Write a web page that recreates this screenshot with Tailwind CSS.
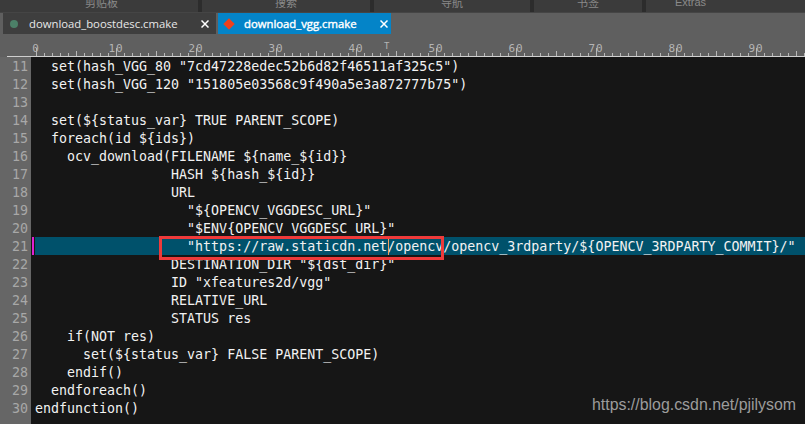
<!DOCTYPE html>
<html lang="en">
<head>
    <meta charset="UTF-8">
    <title>download_vgg.cmake</title>
    <script src="https://cdn.jsdelivr.net/npm/@tailwindcss/browser@4"></script>
</head>
<body class="bg-[#161616]">
    <div class="relative w-[805px] h-[424px] overflow-hidden flex flex-col">
        <!-- Ribbon, cut off at the top -->
        <div class="flex h-[12px] shrink-0 gap-[4px] bg-[#2c2c2c] overflow-hidden text-[11px] leading-[10px] text-[#8a8a8a] font-['Noto_Sans_CJK_SC',sans-serif]">
            <div class="w-[198px] bg-[#3b3b3b] text-right pr-[80px] -mt-[3px] h-[16px]">剪贴板</div>
            <div class="w-[168px] bg-[#3b3b3b] text-center -mt-[3px] h-[16px]">搜索</div>
            <div class="w-[156px] bg-[#3b3b3b] text-center -mt-[3px] h-[16px]">导航</div>
            <div class="w-[108px] bg-[#3b3b3b] text-center -mt-[3px] h-[16px]">书签</div>
            <div class="flex-1 bg-[#3b3b3b] text-center -mt-[3px] h-[16px] pr-[70px] font-['Liberation_Sans',sans-serif]">Extras</div>
        </div>

        <!-- Tabs -->
        <div class="flex h-[22px] shrink-0 pl-[3px] gap-[2px] bg-[#5f5f5f] border-t border-[#454545] text-[11.3px] leading-[21px] font-['Open_Sans',sans-serif]">
            <div class="w-[213px] flex items-center bg-[#3e3e3e] text-[#e8e8e8]">
                <span class="ml-[7px] w-[8px] h-[8px] rounded-full bg-[#4c8068]"></span>
                <span class="ml-[11px] flex-1">download_boostdesc.cmake</span>
                <svg class="mr-[7px]" width="8" height="8" viewBox="0 0 8 8"><path d="M0.5 0.5L7.5 7.5M7.5 0.5L0.5 7.5" stroke="#fff" stroke-width="1.5"/></svg>
            </div>
            <div class="w-[173px] flex items-center bg-[#0484c8] text-white [-webkit-text-stroke:0.4px_white]">
                <span class="ml-[7px] w-[8px] h-[8px] rotate-45 bg-[#f0401c]"></span>
                <span class="ml-[11px] flex-1">download_vgg.cmake</span>
                <svg class="mr-[3px]" width="8" height="8" viewBox="0 0 8 8"><path d="M0.5 0.5L7.5 7.5M7.5 0.5L0.5 7.5" stroke="#fff" stroke-width="1.5"/></svg>
            </div>
        </div>

        <!-- Ruler -->
        <div class="relative h-[23px] shrink-0 bg-[#5f5f5f] font-['DejaVu_Sans_Mono',monospace] text-[11px] leading-[12px] tracking-[1px] text-[#b4b4b4]">
            <svg class="absolute left-0 top-0" width="805" height="23">
                <defs>
                    <pattern id="ticks" x="36" y="0" width="80" height="23" patternUnits="userSpaceOnUse">
                        <path d="M0.5 14V22M8.5 19V22M16.5 19V22M24.5 19V22M32.5 19V22M40.5 17V22M48.5 19V22M56.5 19V22M64.5 19V22M72.5 19V22" stroke="#b8b8b8"/>
                    </pattern>
                </defs>
                <rect x="36" width="769" height="23" fill="url(#ticks)"/>
                <rect x="7" y="22" width="798" height="1" fill="#cfcfcf"/>
            </svg>
            <div class="relative flex ml-[-4px] pt-[9px]">
                <span class="w-[80px] shrink-0 text-center">0</span>
                <span class="w-[80px] shrink-0 text-center">10</span>
                <span class="w-[80px] shrink-0 text-center">20</span>
                <span class="w-[80px] shrink-0 text-center">30</span>
                <span class="w-[80px] shrink-0 text-center">40</span>
                <span class="w-[80px] shrink-0 text-center">50</span>
                <span class="w-[80px] shrink-0 text-center">60</span>
                <span class="w-[80px] shrink-0 text-center">70</span>
                <span class="w-[80px] shrink-0 text-center">80</span>
                <span class="w-[80px] shrink-0 text-center">90</span>
            </div>
            <span class="absolute left-[384px] top-[8px] text-[9px] leading-[9px]">T</span>
        </div>

        <!-- Editor -->
        <div class="flex-1 font-['DejaVu_Sans_Mono',monospace] text-[13.3px] leading-[20px] text-[#f2f2f2]">
            <div class="flex h-[18px]"><span class="w-[31px] shrink-0 pr-[3px] text-right bg-[#666666] text-[#a8a8a8]">11</span><span class="pl-[4px] whitespace-pre">  set(hash_VGG_80 "7cd47228edec52b6d82f46511af325c5")</span></div>
            <div class="flex h-[18px]"><span class="w-[31px] shrink-0 pr-[3px] text-right bg-[#666666] text-[#a8a8a8]">12</span><span class="pl-[4px] whitespace-pre">  set(hash_VGG_120 "151805e03568c9f490a5e3a872777b75")</span></div>
            <div class="flex h-[18px]"><span class="w-[31px] shrink-0 pr-[3px] text-right bg-[#666666] text-[#a8a8a8]">13</span></div>
            <div class="flex h-[18px]"><span class="w-[31px] shrink-0 pr-[3px] text-right bg-[#666666] text-[#a8a8a8]">14</span><span class="pl-[4px] whitespace-pre">  set(${status_var} TRUE PARENT_SCOPE)</span></div>
            <div class="flex h-[18px]"><span class="w-[31px] shrink-0 pr-[3px] text-right bg-[#666666] text-[#a8a8a8]">15</span><span class="pl-[4px] whitespace-pre">  foreach(id ${ids})</span></div>
            <div class="flex h-[18px]"><span class="w-[31px] shrink-0 pr-[3px] text-right bg-[#666666] text-[#a8a8a8]">16</span><span class="pl-[4px] whitespace-pre">    ocv_download(FILENAME ${name_${id}}</span></div>
            <div class="flex h-[18px]"><span class="w-[31px] shrink-0 pr-[3px] text-right bg-[#666666] text-[#a8a8a8]">17</span><span class="pl-[4px] whitespace-pre">                 HASH ${hash_${id}}</span></div>
            <div class="flex h-[18px]"><span class="w-[31px] shrink-0 pr-[3px] text-right bg-[#666666] text-[#a8a8a8]">18</span><span class="pl-[4px] whitespace-pre">                 URL</span></div>
            <div class="flex h-[18px]"><span class="w-[31px] shrink-0 pr-[3px] text-right bg-[#666666] text-[#a8a8a8]">19</span><span class="pl-[4px] whitespace-pre">                   "${OPENCV_VGGDESC_URL}"</span></div>
            <div class="flex h-[18px]"><span class="w-[31px] shrink-0 pr-[3px] text-right bg-[#666666] text-[#a8a8a8]">20</span><span class="relative z-10 pl-[4px] whitespace-pre">                   "$ENV{OPENCV_VGGDESC_URL}"</span></div>
            <div class="flex h-[18px]"><span class="w-[31px] shrink-0 pr-[3px] text-right bg-[#666666] text-[#a8a8a8]">21</span><span class="w-[2px] ml-[1px] bg-[#e020d0]"></span><span class="w-[1px]"></span><span class="relative flex-1 bg-[#00516b] whitespace-pre">                   "https://raw.staticdn.net/opencv/opencv_3rdparty/${OPENCV_3RDPARTY_COMMIT}/"<span class="absolute left-[353px] top-0 w-[1px] h-[18px] bg-[#f0a060]"></span></span></div>
            <div class="flex h-[18px]"><span class="w-[31px] shrink-0 pr-[3px] text-right bg-[#666666] text-[#a8a8a8]">22</span><span class="pl-[4px] whitespace-pre">                 DESTINATION_DIR "${dst_dir}"</span></div>
            <div class="flex h-[18px]"><span class="w-[31px] shrink-0 pr-[3px] text-right bg-[#666666] text-[#a8a8a8]">23</span><span class="pl-[4px] whitespace-pre">                 ID "xfeatures2d/vgg"</span></div>
            <div class="flex h-[18px]"><span class="w-[31px] shrink-0 pr-[3px] text-right bg-[#666666] text-[#a8a8a8]">24</span><span class="pl-[4px] whitespace-pre">                 RELATIVE_URL</span></div>
            <div class="flex h-[18px]"><span class="w-[31px] shrink-0 pr-[3px] text-right bg-[#666666] text-[#a8a8a8]">25</span><span class="pl-[4px] whitespace-pre">                 STATUS res</span></div>
            <div class="flex h-[18px]"><span class="w-[31px] shrink-0 pr-[3px] text-right bg-[#666666] text-[#a8a8a8]">26</span><span class="pl-[4px] whitespace-pre">    if(NOT res)</span></div>
            <div class="flex h-[18px]"><span class="w-[31px] shrink-0 pr-[3px] text-right bg-[#666666] text-[#a8a8a8]">27</span><span class="pl-[4px] whitespace-pre">      set(${status_var} FALSE PARENT_SCOPE)</span></div>
            <div class="flex h-[18px]"><span class="w-[31px] shrink-0 pr-[3px] text-right bg-[#666666] text-[#a8a8a8]">28</span><span class="pl-[4px] whitespace-pre">    endif()</span></div>
            <div class="flex h-[18px]"><span class="w-[31px] shrink-0 pr-[3px] text-right bg-[#666666] text-[#a8a8a8]">29</span><span class="pl-[4px] whitespace-pre">  endforeach()</span></div>
            <div class="flex h-[18px]"><span class="w-[31px] shrink-0 pr-[3px] text-right bg-[#666666] text-[#a8a8a8]">30</span><span class="pl-[4px] whitespace-pre">endfunction()</span></div>
            <div class="flex h-[18px]"><span class="w-[31px] shrink-0 bg-[#666666]"></span></div>
        </div>

        <!-- Red annotation box -->
        <div class="absolute z-20 left-[159px] top-[236px] w-[285px] h-[24px] border-[3px] border-[#ee3a3a]"></div>
        <!-- Watermark -->
        <div class="absolute left-[592px] top-[395px] text-[15.9px] leading-[20px] text-[#9c9c9c] font-['Liberation_Sans',sans-serif]">https://blog.csdn.net/pjilysom</div>
    </div>
</body>
</html>
